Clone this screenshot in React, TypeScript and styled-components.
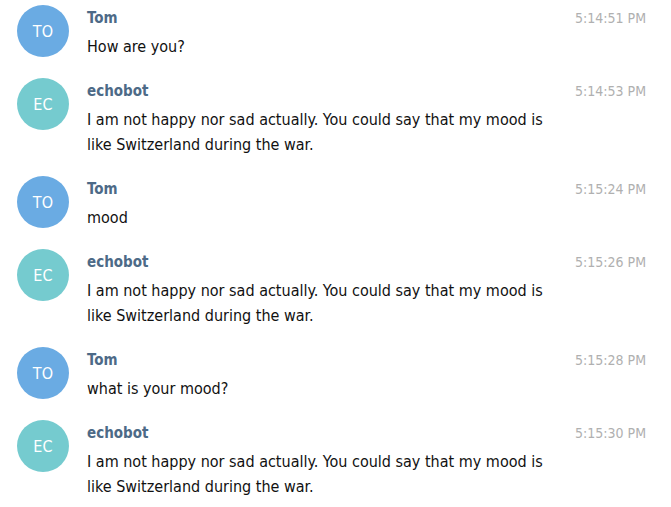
import React from "react";
import styled, { createGlobalStyle } from "styled-components";

const Global = createGlobalStyle`
  html, body { margin: 0; padding: 0; background: #ffffff; }
  body { font-family: "DejaVu Sans Condensed", "DejaVu Sans", sans-serif; }
`;

type Msg = { who: "Tom" | "echobot"; time: string; text: string[] };

const messages: Msg[] = [
  { who: "Tom", time: "5:14:51 PM", text: ["How are you?"] },
  {
    who: "echobot",
    time: "5:14:53 PM",
    text: [
      "I am not happy nor sad actually. You could say that my mood is",
      "like Switzerland during the war.",
    ],
  },
  { who: "Tom", time: "5:15:24 PM", text: ["mood"] },
  {
    who: "echobot",
    time: "5:15:26 PM",
    text: [
      "I am not happy nor sad actually. You could say that my mood is",
      "like Switzerland during the war.",
    ],
  },
  { who: "Tom", time: "5:15:28 PM", text: ["what is your mood?"] },
  {
    who: "echobot",
    time: "5:15:30 PM",
    text: [
      "I am not happy nor sad actually. You could say that my mood is",
      "like Switzerland during the war.",
    ],
  },
];

const List = styled.div`
  display: flex;
  flex-direction: column;
  gap: 19px;
  padding: 5px 25px 0 17px;
`;

const Row = styled.div`
  display: flex;
  align-items: flex-start;
  gap: 18px;
`;

const Avatar = styled.div<{ $bot: boolean }>`
  flex: 0 0 52px;
  width: 52px;
  height: 52px;
  border-radius: 50%;
  background: ${(p) => (p.$bot ? "#75cbcf" : "#6aabe3")};
  color: #ffffff;
  display: flex;
  align-items: center;
  justify-content: center;
  font-size: 16px;
  font-weight: 300;
  letter-spacing: 0.2px;
`;

const Body = styled.div`
  flex: 1;
  margin-top: 2px;
  display: flex;
  flex-direction: column;
`;

const Header = styled.div`
  display: flex;
  justify-content: space-between;
  align-items: center;
  height: 22px;
  margin-bottom: 5px;
`;

const Name = styled.span`
  font-size: 15px;
  font-weight: bold;
  color: #4d6a87;
`;

const Time = styled.span`
  font-size: 14px;
  color: #b0b0b0;
`;

const Text = styled.div`
  font-size: 16px;
  line-height: 25px;
  color: #111111;
`;

export default function App() {
  return (
    <>
      <Global />
      <List>
        {messages.map((m, i) => (
          <Row key={i}>
            <Avatar $bot={m.who === "echobot"}>
              {m.who === "echobot" ? "EC" : "TO"}
            </Avatar>
            <Body>
              <Header>
                <Name>{m.who}</Name>
                <Time>{m.time}</Time>
              </Header>
              <Text>
                {m.text.map((t, j) => (
                  <div key={j}>{t}</div>
                ))}
              </Text>
            </Body>
          </Row>
        ))}
      </List>
    </>
  );
}
